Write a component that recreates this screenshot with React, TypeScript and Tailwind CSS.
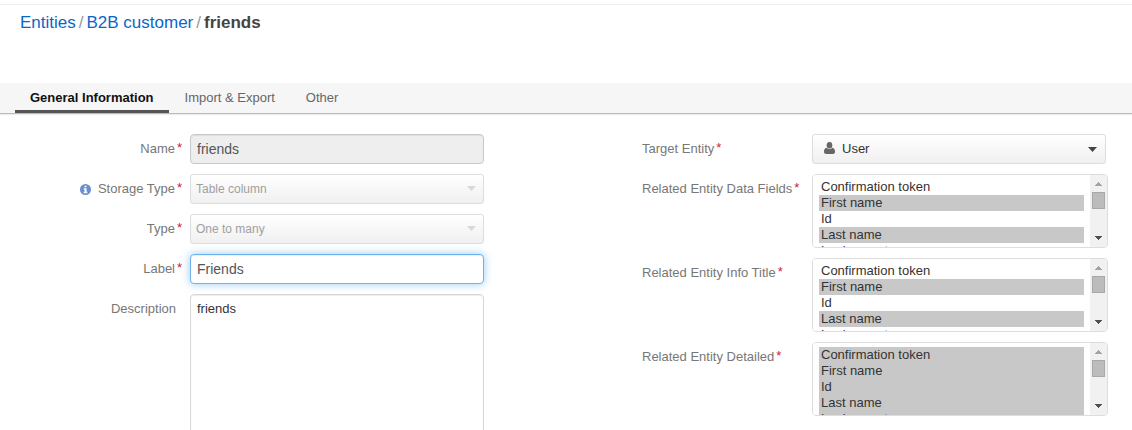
import type { ReactNode } from "react";

const ENTITY_FIELDS = ["Confirmation token", "First name", "Id", "Last name", "Login count"];

function Label({ htmlFor, required = false, children }: { htmlFor: string; required?: boolean; children: ReactNode }) {
  return (
    <label htmlFor={htmlFor} className="flex items-start text-[13px] leading-5 text-[#777777]">
      {children}
      {required && <span className="w-[7px] pl-0.5 leading-[18px] text-[#c81e3c]">*</span>}
    </label>
  );
}

function LeftRow({ label, children }: { label: ReactNode; children: ReactNode }) {
  return (
    <div className="flex items-start">
      <div className="mr-2 flex w-[182px] shrink-0 items-center justify-end gap-[7px] pt-[5px]">{label}</div>
      <div className="min-w-0 flex-1">{children}</div>
    </div>
  );
}

function RightRow({ label, children }: { label: ReactNode; children: ReactNode }) {
  return (
    <div className="flex items-start">
      <div className="w-[170px] shrink-0 pt-[5px]">{label}</div>
      <div className="min-w-0 flex-1">{children}</div>
    </div>
  );
}

function InfoIcon() {
  return (
    <svg viewBox="0 0 12 12" className="size-[11px] text-[#678ed0]" aria-hidden="true">
      <circle cx="6" cy="6" r="6" fill="currentColor" />
      <path d="M5 1.8h2.1v1.8H5zM4 4.7h3.1v3.8H8V10H4V8.500h1V6.100H4z" fill="white" />
    </svg>
  );
}

function UserIcon() {
  return (
    <svg viewBox="0 0 11 12" className="pointer-events-none absolute top-2 left-3 h-3 w-[11px] text-[#666666]" aria-hidden="true">
      <ellipse cx="5.5" cy="3.2" rx="2.8" ry="3.2" fill="currentColor" />
      <path d="M2.600 5.700C.8 6 0 7.600 0 9.800 0 11.200.8 12 2.200 12h6.600c1.400 0 2.200-.8 2.200-2.200 0-2.200-.8-3.800-2.600-4.100C7.600 6.600 6.600 7.100 5.500 7.100S3.400 6.600 2.600 5.700z" fill="currentColor" />
    </svg>
  );
}

function Caret({ className }: { className: string }) {
  return (
    <svg viewBox="0 0 9 5" className={`pointer-events-none absolute h-[5px] w-[9px] ${className}`} aria-hidden="true">
      <path d="M0 0h9L4.5 5z" fill="currentColor" />
    </svg>
  );
}

function DisabledSelect({ id, value }: { id: string; value: string }) {
  return (
    <div className="relative">
      <select
        id={id}
        disabled
        className="block h-[30px] w-full appearance-none rounded-[3px] border border-[#dddddd] bg-linear-to-b from-white to-[#f0f0f0] px-[5px] text-[12px] text-[#a0a0a0] opacity-100"
      >
        <option>{value}</option>
      </select>
      <Caret className="top-3 right-2 text-[#d8d8d8]" />
    </div>
  );
}

function FieldList({ id, selected }: { id: string; selected: string[] }) {
  return (
    <div className="-mr-0.5 flex h-[74px] overflow-hidden rounded-[4px] border border-[#dddddd] bg-white">
      <select
        id={id}
        multiple
        defaultValue={selected}
        className="block h-[72px] min-w-0 flex-1 appearance-none overflow-y-auto bg-white px-1.5 pt-1 text-[13px] text-[#333333] outline-none [scrollbar-width:none]"
      >
        {ENTITY_FIELDS.map((field) => (
          <option key={field} className="block h-4 min-h-4 px-0.5 py-0 leading-4 checked:bg-[#c8c8c8] checked:text-[#333333]">
            {field}
          </option>
        ))}
      </select>
      <div aria-hidden="true" className="flex w-[17px] flex-col items-center bg-[#f1f1f1] pt-[7px] pb-[7px]">
        <svg viewBox="0 0 7 4" shapeRendering="crispEdges" className="h-1 w-[7px] text-[#a3a3a3]">
          <path d="M3 0h1v1h1v1h1v1h1v1H0V3h1V2h1V1h1z" fill="currentColor" />
        </svg>
        <div className="mt-1.5 h-[17px] w-[13px] border border-[#a8a8a8] bg-[#bcbcbc]" />
        <svg viewBox="0 0 7 4" shapeRendering="crispEdges" className="mt-auto h-1 w-[7px] text-[#505050]">
          <path d="M0 0h7v1H6v1H5v1H4v1H3V3H2V2H1V1H0z" fill="currentColor" />
        </svg>
      </div>
    </div>
  );
}

export default function App() {
  return (
    <div className="h-screen overflow-hidden bg-white pt-1 font-['Liberation_Sans',Arial,sans-serif] text-[13px] text-[#333333]">
      <header className="h-[79px] border-t border-[#eeeeee] px-5 pt-2">
        <nav aria-label="Breadcrumb">
          <ol className="flex gap-[3px] text-[17px] leading-5">
            <li>
              <a href="#entities" className="text-[#0a67c9]">Entities</a>
            </li>
            <li aria-hidden="true" className="text-[#999999]">/</li>
            <li>
              <a href="#b2b-customer" className="text-[#0a67c9]">B2B customer</a>
            </li>
            <li aria-hidden="true" className="text-[#999999]">/</li>
            <li aria-current="page" className="font-bold text-[#444444]">friends</li>
          </ol>
        </nav>
      </header>

      <nav aria-label="Sections" className="flex h-[31px] gap-px border-b border-[#bbbbbb] bg-[#f6f6f6] px-[15px] shadow-[0_1px_1px_#eeeeee]">
        <a href="#general" aria-current="true" className="border-b-[3px] border-[#555555] px-[15px] pt-[5px] leading-5 font-bold text-[#111111]">
          General Information
        </a>
        <a href="#import-export" className="px-[15px] pt-[5px] leading-5 text-[#666666]">Import &amp; Export</a>
        <a href="#other" className="px-[15px] pt-[5px] leading-5 text-[#666666]">Other</a>
      </nav>

      <form className="grid grid-cols-2 pt-5">
        <div className="flex flex-col gap-2.5 pr-[82px]">
          <LeftRow label={<Label htmlFor="name" required>Name</Label>}>
            <input
              id="name"
              readOnly
              defaultValue="friends"
              className="block h-[30px] w-full rounded-[4px] border border-[#c8c8c8] bg-[#eeeeee] px-1.5 text-[14px] text-[#555555] shadow-[inset_0_1px_1px_rgba(0,0,0,0.075)] outline-none"
            />
          </LeftRow>
          <LeftRow
            label={
              <>
                <InfoIcon />
                <Label htmlFor="storage" required>Storage Type</Label>
              </>
            }
          >
            <DisabledSelect id="storage" value="Table column" />
          </LeftRow>
          <LeftRow label={<Label htmlFor="type" required>Type</Label>}>
            <DisabledSelect id="type" value="One to many" />
          </LeftRow>
          <LeftRow label={<Label htmlFor="label" required>Label</Label>}>
            <input
              id="label"
              defaultValue="Friends"
              className="block h-[30px] w-full rounded-[4px] border border-[#6db3ee] bg-white px-1.5 text-[14px] text-[#555555] shadow-[inset_0_1px_1px_rgba(0,0,0,0.075),0_0_8px_rgba(82,168,236,0.6)] outline-none"
            />
          </LeftRow>
          <LeftRow label={<div className="pr-1.5"><Label htmlFor="description">Description</Label></div>}>
            <textarea
              id="description"
              defaultValue="friends"
              className="block h-[200px] w-full resize-none rounded-[4px] border border-[#d8d8d8] bg-white px-1.5 py-1 text-[13px] leading-5 text-[#333333] shadow-[inset_0_1px_1px_rgba(0,0,0,0.075)] outline-none"
            />
          </LeftRow>
        </div>

        <div className="flex flex-col gap-2.5 pr-[26px] pl-[76px]">
          <RightRow label={<Label htmlFor="target" required>Target Entity</Label>}>
            <div className="relative">
              <select
                id="target"
                className="block h-[30px] w-full appearance-none rounded-[3px] border border-[#dddddd] bg-linear-to-b from-white to-[#f0f0f0] pr-5 pl-[29px] text-[13px] text-[#333333] outline-none"
              >
                <option>User</option>
              </select>
              <UserIcon />
              <Caret className="top-[13px] right-[9px] text-[#444444]" />
            </div>
          </RightRow>
          <RightRow label={<Label htmlFor="data-fields" required>Related Entity Data Fields</Label>}>
            <FieldList id="data-fields" selected={["First name", "Last name"]} />
          </RightRow>
          <RightRow label={<Label htmlFor="info-title" required>Related Entity Info Title</Label>}>
            <FieldList id="info-title" selected={["First name", "Last name"]} />
          </RightRow>
          <RightRow label={<Label htmlFor="detailed" required>Related Entity Detailed</Label>}>
            <FieldList id="detailed" selected={ENTITY_FIELDS} />
          </RightRow>
        </div>
      </form>
    </div>
  );
}
